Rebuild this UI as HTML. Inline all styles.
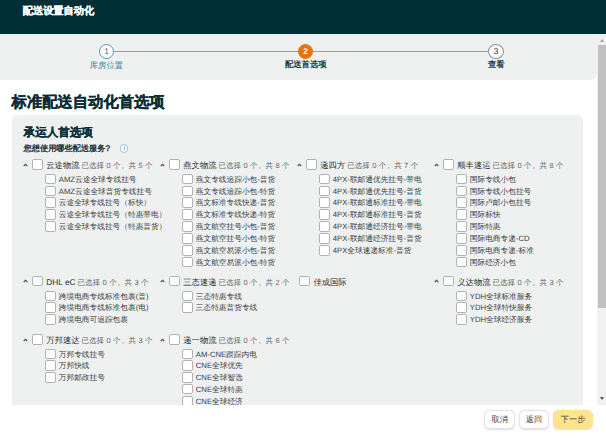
<!DOCTYPE html>
<html><head><meta charset="utf-8">
<style>
*{box-sizing:border-box;margin:0;padding:0}
html,body{width:606px;height:439px;overflow:hidden;background:#fff;font-family:"Liberation Sans",sans-serif;color:#0f1111;text-rendering:geometricPrecision}
.hdr{position:absolute;left:0;top:0;width:606px;height:33.8px;background:#002f36;z-index:5}
.hdr .t{position:absolute;left:22.8px;top:5.5px;font-size:10.2px;-webkit-text-stroke:0.25px #fff;font-weight:bold;color:#fff;line-height:12px;white-space:nowrap}
.scroll{position:absolute;left:0;top:0;width:606px;height:405px;overflow:hidden;background:#fff}
.steps{position:absolute;left:-6px;top:33.6px;width:603.3px;height:46.5px;background:#eff1f1;border-radius:0 0 6px 6px}
.line{position:absolute;top:50.8px;height:1px;background:#9a9d9e}
.circ{position:absolute;top:43.5px;width:15px;height:15px;border-radius:50%;border:0.9px solid #4d9bb3;background:#fff;font-size:8.3px;text-align:center;line-height:13.4px;color:#1f6f88}
.slab{position:absolute;top:59px;font-size:8.3px;line-height:10px;white-space:nowrap}
.title{position:absolute;left:11.6px;top:94px;font-size:15.3px;font-weight:bold;color:#0a2e36;-webkit-text-stroke:0.3px #0a2e36;line-height:17px;white-space:nowrap}
.card{position:absolute;left:12px;top:115px;width:571px;height:400px;background:#eff1f1;border-radius:6px}
.ct{position:absolute;left:23.6px;top:126px;font-size:11.55px;font-weight:bold;color:#0a2e36;-webkit-text-stroke:0.25px #0a2e36;line-height:14px;white-space:nowrap}
.cq{position:absolute;left:23.6px;top:143.7px;font-size:8.2px;font-weight:normal;-webkit-text-stroke:0.3px #0f1f24;color:#0f1f24;line-height:10px;white-space:nowrap}
.info{position:absolute;left:119.8px;top:144.1px;width:8.5px;height:8.5px;border:0.8px solid #96c6de;border-radius:50%;background:#fff}
.info:after{content:"";position:absolute;left:2.9px;top:2.0px;width:0.95px;height:3.3px;background:#6aa9cc;border-radius:0.5px}
.chev{position:absolute}
.cb{position:absolute;width:10.6px;height:10.5px;border:1px solid #b0b3b3;border-radius:2px;background:#fff}
.gl{position:absolute;font-size:8.3px;line-height:10.2px;white-space:nowrap;color:#2a2d2d}
.cnt{font-size:7.5px;color:#626565;margin-left:2px;word-spacing:0.4px}
.cm{display:inline-block;width:7.8px;padding-left:1.2px}
.sl{position:absolute;font-size:7.7px;line-height:10.2px;white-space:nowrap;color:#3a3d3d}
.sb{position:absolute;left:597px;top:33.7px;width:9px;height:371.1px;background:#f1f1f1;z-index:6}
.thumb{position:absolute;left:1px;top:11px;width:8px;height:263px;background:#c1c1c1}
.arr{position:absolute;left:3.2px;width:0;height:0;border-left:2.6px solid transparent;border-right:2.6px solid transparent}
.footer{position:absolute;left:0;top:405px;width:606px;height:34px;background:#fff}
.btn{position:absolute;top:5px;height:18.8px;border-radius:5.5px;border:0.8px solid #e1e4e4;background:#fff;font-size:8.2px;line-height:17.2px;text-align:center;color:#3f4242;box-shadow:0 0.5px 1.5px rgba(15,17,17,.12)}
</style></head><body>
<div class="hdr"><div class="t">配送设置自动化</div></div>
<div class="scroll">
  <div class="steps"></div>
  <div class="line" style="left:114px;width:374px"></div>
  <div class="circ" style="left:99px">1</div>
  <div class="circ" style="left:298px;background:#e3740f;border-color:#e3740f;color:#fff;font-weight:bold">2</div>
  <div class="circ" style="left:488px;width:16px;height:15.6px;border-color:#8d9096;color:#2b2e2e">3</div>
  <div class="slab" style="left:89.8px;top:59.6px;color:#2f86a2">库房位置</div>
  <div class="slab" style="left:285px;font-weight:bold;color:#1d3a44">配送首选项</div>
  <div class="slab" style="left:488px;font-weight:bold;color:#27444c">查看</div>
  <div class="title">标准配送自动化首选项</div>
  <div class="card"></div>
  <div class="ct">承运人首选项</div>
  <div class="cq">您想使用哪些配送服务?</div>
  <div class="info"></div>
<svg class="chev" style="left:23.3px;top:162.7px" width="6" height="5" viewBox="0 0 6 5"><polyline points="0.75,3.0 2.5,1.3 4.25,3.0" fill="none" stroke="#5a5d5d" stroke-width="1.2" stroke-linejoin="round"/></svg>
<i class="cb" style="left:32.2px;top:159.1px"></i>
<span class="gl" style="left:46.3px;top:160.2px">云途物流<span class="cnt">已选择 0 个<span class="cm">,</span>共 5 个</span></span>
<i class="cb" style="left:45.1px;top:173.7px"></i>
<span class="sl" style="left:58.8px;top:174.7px">AMZ云途全球专线挂号</span>
<i class="cb" style="left:45.1px;top:185.59px"></i>
<span class="sl" style="left:58.8px;top:186.59px">AMZ云途全球普货专线挂号</span>
<i class="cb" style="left:45.1px;top:197.48px"></i>
<span class="sl" style="left:58.8px;top:198.48px">云途全球专线挂号（标快）</span>
<i class="cb" style="left:45.1px;top:209.37px"></i>
<span class="sl" style="left:58.8px;top:210.37px">云途全球专线挂号（特惠带电）</span>
<i class="cb" style="left:45.1px;top:221.26px"></i>
<span class="sl" style="left:58.8px;top:222.26px">云途全球专线挂号（特惠普货）</span>
<svg class="chev" style="left:160.3px;top:162.7px" width="6" height="5" viewBox="0 0 6 5"><polyline points="0.75,3.0 2.5,1.3 4.25,3.0" fill="none" stroke="#5a5d5d" stroke-width="1.2" stroke-linejoin="round"/></svg>
<i class="cb" style="left:169.2px;top:159.1px"></i>
<span class="gl" style="left:183.3px;top:160.2px">燕文物流<span class="cnt">已选择 0 个<span class="cm">,</span>共 8 个</span></span>
<i class="cb" style="left:182.1px;top:173.7px"></i>
<span class="sl" style="left:195.8px;top:174.7px">燕文专线追踪小包-普货</span>
<i class="cb" style="left:182.1px;top:185.59px"></i>
<span class="sl" style="left:195.8px;top:186.59px">燕文专线追踪小包-特货</span>
<i class="cb" style="left:182.1px;top:197.48px"></i>
<span class="sl" style="left:195.8px;top:198.48px">燕文标准专线快递-普货</span>
<i class="cb" style="left:182.1px;top:209.37px"></i>
<span class="sl" style="left:195.8px;top:210.37px">燕文标准专线快递-特货</span>
<i class="cb" style="left:182.1px;top:221.26px"></i>
<span class="sl" style="left:195.8px;top:222.26px">燕文航空挂号小包-普货</span>
<i class="cb" style="left:182.1px;top:233.15px"></i>
<span class="sl" style="left:195.8px;top:234.15px">燕文航空挂号小包-特货</span>
<i class="cb" style="left:182.1px;top:245.04px"></i>
<span class="sl" style="left:195.8px;top:246.04px">燕文航空易派小包-普货</span>
<i class="cb" style="left:182.1px;top:256.93px"></i>
<span class="sl" style="left:195.8px;top:257.93px">燕文航空易派小包-特货</span>
<svg class="chev" style="left:297.3px;top:162.7px" width="6" height="5" viewBox="0 0 6 5"><polyline points="0.75,3.0 2.5,1.3 4.25,3.0" fill="none" stroke="#5a5d5d" stroke-width="1.2" stroke-linejoin="round"/></svg>
<i class="cb" style="left:306.2px;top:159.1px"></i>
<span class="gl" style="left:320.3px;top:160.2px">递四方<span class="cnt">已选择 0 个<span class="cm">,</span>共 7 个</span></span>
<i class="cb" style="left:319.1px;top:173.7px"></i>
<span class="sl" style="left:332.8px;top:174.7px">4PX-联邮通优先挂号-带电</span>
<i class="cb" style="left:319.1px;top:185.59px"></i>
<span class="sl" style="left:332.8px;top:186.59px">4PX-联邮通优先挂号-普货</span>
<i class="cb" style="left:319.1px;top:197.48px"></i>
<span class="sl" style="left:332.8px;top:198.48px">4PX-联邮通标准挂号-带电</span>
<i class="cb" style="left:319.1px;top:209.37px"></i>
<span class="sl" style="left:332.8px;top:210.37px">4PX-联邮通标准挂号-普货</span>
<i class="cb" style="left:319.1px;top:221.26px"></i>
<span class="sl" style="left:332.8px;top:222.26px">4PX-联邮通经济挂号-带电</span>
<i class="cb" style="left:319.1px;top:233.15px"></i>
<span class="sl" style="left:332.8px;top:234.15px">4PX-联邮通经济挂号-普货</span>
<i class="cb" style="left:319.1px;top:245.04px"></i>
<span class="sl" style="left:332.8px;top:246.04px">4PX全球速递标准-普货</span>
<svg class="chev" style="left:434.3px;top:162.7px" width="6" height="5" viewBox="0 0 6 5"><polyline points="0.75,3.0 2.5,1.3 4.25,3.0" fill="none" stroke="#5a5d5d" stroke-width="1.2" stroke-linejoin="round"/></svg>
<i class="cb" style="left:443.2px;top:159.1px"></i>
<span class="gl" style="left:457.3px;top:160.2px">顺丰速运<span class="cnt">已选择 0 个<span class="cm">,</span>共 8 个</span></span>
<i class="cb" style="left:456.1px;top:173.7px"></i>
<span class="sl" style="left:469.8px;top:174.7px">国际专线小包</span>
<i class="cb" style="left:456.1px;top:185.59px"></i>
<span class="sl" style="left:469.8px;top:186.59px">国际专线小包挂号</span>
<i class="cb" style="left:456.1px;top:197.48px"></i>
<span class="sl" style="left:469.8px;top:198.48px">国际卢邮小包挂号</span>
<i class="cb" style="left:456.1px;top:209.37px"></i>
<span class="sl" style="left:469.8px;top:210.37px">国际标快</span>
<i class="cb" style="left:456.1px;top:221.26px"></i>
<span class="sl" style="left:469.8px;top:222.26px">国际特惠</span>
<i class="cb" style="left:456.1px;top:233.15px"></i>
<span class="sl" style="left:469.8px;top:234.15px">国际电商专递-CD</span>
<i class="cb" style="left:456.1px;top:245.04px"></i>
<span class="sl" style="left:469.8px;top:246.04px">国际电商专递-标准</span>
<i class="cb" style="left:456.1px;top:256.93px"></i>
<span class="sl" style="left:469.8px;top:257.93px">国际经济小包</span>
<svg class="chev" style="left:23.3px;top:279.3px" width="6" height="5" viewBox="0 0 6 5"><polyline points="0.75,3.0 2.5,1.3 4.25,3.0" fill="none" stroke="#5a5d5d" stroke-width="1.2" stroke-linejoin="round"/></svg>
<i class="cb" style="left:32.2px;top:275.7px"></i>
<span class="gl" style="left:46.3px;top:276.8px">DHL eC<span class="cnt">已选择 0 个<span class="cm">,</span>共 3 个</span></span>
<i class="cb" style="left:45.1px;top:290.5px"></i>
<span class="sl" style="left:58.8px;top:291.5px">跨境电商专线标准包裹(普)</span>
<i class="cb" style="left:45.1px;top:302.45px"></i>
<span class="sl" style="left:58.8px;top:303.45px">跨境电商专线标准包裹(电)</span>
<i class="cb" style="left:45.1px;top:314.4px"></i>
<span class="sl" style="left:58.8px;top:315.4px">跨境电商可追踪包裹</span>
<svg class="chev" style="left:160.3px;top:279.3px" width="6" height="5" viewBox="0 0 6 5"><polyline points="0.75,3.0 2.5,1.3 4.25,3.0" fill="none" stroke="#5a5d5d" stroke-width="1.2" stroke-linejoin="round"/></svg>
<i class="cb" style="left:169.2px;top:275.7px"></i>
<span class="gl" style="left:183.3px;top:276.8px">三态速递<span class="cnt">已选择 0 个<span class="cm">,</span>共 2 个</span></span>
<i class="cb" style="left:182.1px;top:290.5px"></i>
<span class="sl" style="left:195.8px;top:291.5px">三态特惠专线</span>
<i class="cb" style="left:182.1px;top:302.45px"></i>
<span class="sl" style="left:195.8px;top:303.45px">三态特惠普货专线</span>
<i class="cb" style="left:299.4px;top:275.7px"></i>
<span class="gl" style="left:313.4px;top:276.8px">佳成国际</span>
<svg class="chev" style="left:434.3px;top:279.3px" width="6" height="5" viewBox="0 0 6 5"><polyline points="0.75,3.0 2.5,1.3 4.25,3.0" fill="none" stroke="#5a5d5d" stroke-width="1.2" stroke-linejoin="round"/></svg>
<i class="cb" style="left:443.2px;top:275.7px"></i>
<span class="gl" style="left:457.3px;top:276.8px">义达物流<span class="cnt">已选择 0 个<span class="cm">,</span>共 3 个</span></span>
<i class="cb" style="left:456.1px;top:290.5px"></i>
<span class="sl" style="left:469.8px;top:291.5px">YDH全球标准服务</span>
<i class="cb" style="left:456.1px;top:302.45px"></i>
<span class="sl" style="left:469.8px;top:303.45px">YDH全球特快服务</span>
<i class="cb" style="left:456.1px;top:314.4px"></i>
<span class="sl" style="left:469.8px;top:315.4px">YDH全球经济服务</span>
<svg class="chev" style="left:23.3px;top:337.7px" width="6" height="5" viewBox="0 0 6 5"><polyline points="0.75,3.0 2.5,1.3 4.25,3.0" fill="none" stroke="#5a5d5d" stroke-width="1.2" stroke-linejoin="round"/></svg>
<i class="cb" style="left:32.2px;top:334.1px"></i>
<span class="gl" style="left:46.3px;top:335.2px">万邦速达<span class="cnt">已选择 0 个<span class="cm">,</span>共 3 个</span></span>
<i class="cb" style="left:45.1px;top:348.7px"></i>
<span class="sl" style="left:58.8px;top:349.7px">万邦专线挂号</span>
<i class="cb" style="left:45.1px;top:360.43px"></i>
<span class="sl" style="left:58.8px;top:361.43px">万邦快线</span>
<i class="cb" style="left:45.1px;top:372.16px"></i>
<span class="sl" style="left:58.8px;top:373.16px">万邦邮政挂号</span>
<svg class="chev" style="left:160.3px;top:337.7px" width="6" height="5" viewBox="0 0 6 5"><polyline points="0.75,3.0 2.5,1.3 4.25,3.0" fill="none" stroke="#5a5d5d" stroke-width="1.2" stroke-linejoin="round"/></svg>
<i class="cb" style="left:169.2px;top:334.1px"></i>
<span class="gl" style="left:183.3px;top:335.2px">递一物流<span class="cnt">已选择 0 个<span class="cm">,</span>共 6 个</span></span>
<i class="cb" style="left:182.1px;top:348.7px"></i>
<span class="sl" style="left:195.8px;top:349.7px">AM-CNE跟踪内电</span>
<i class="cb" style="left:182.1px;top:360.43px"></i>
<span class="sl" style="left:195.8px;top:361.43px">CNE全球优先</span>
<i class="cb" style="left:182.1px;top:372.16px"></i>
<span class="sl" style="left:195.8px;top:373.16px">CNE全球智选</span>
<i class="cb" style="left:182.1px;top:383.89px"></i>
<span class="sl" style="left:195.8px;top:384.89px">CNE全球特惠</span>
<i class="cb" style="left:182.1px;top:395.62px"></i>
<span class="sl" style="left:195.8px;top:396.62px">CNE全球经济</span>
<i class="cb" style="left:182.1px;top:407.35px"></i>
<span class="sl" style="left:195.8px;top:408.35px">CNE全球标准</span>
</div>
<div class="sb"><div class="thumb"></div><div class="arr" style="top:5.2px;border-bottom:3px solid #a3a3a3"></div><div class="arr" style="top:363.8px;border-top:3px solid #505050"></div></div>
<div class="footer">
  <div class="btn" style="left:484.4px;width:30.8px">取消</div>
  <div class="btn" style="left:518.6px;width:30.7px">返回</div>
  <div class="btn" style="left:553.3px;width:39.6px;background:#ffe48f;border-color:#ffe48f">下一步</div>
</div>
</body></html>
